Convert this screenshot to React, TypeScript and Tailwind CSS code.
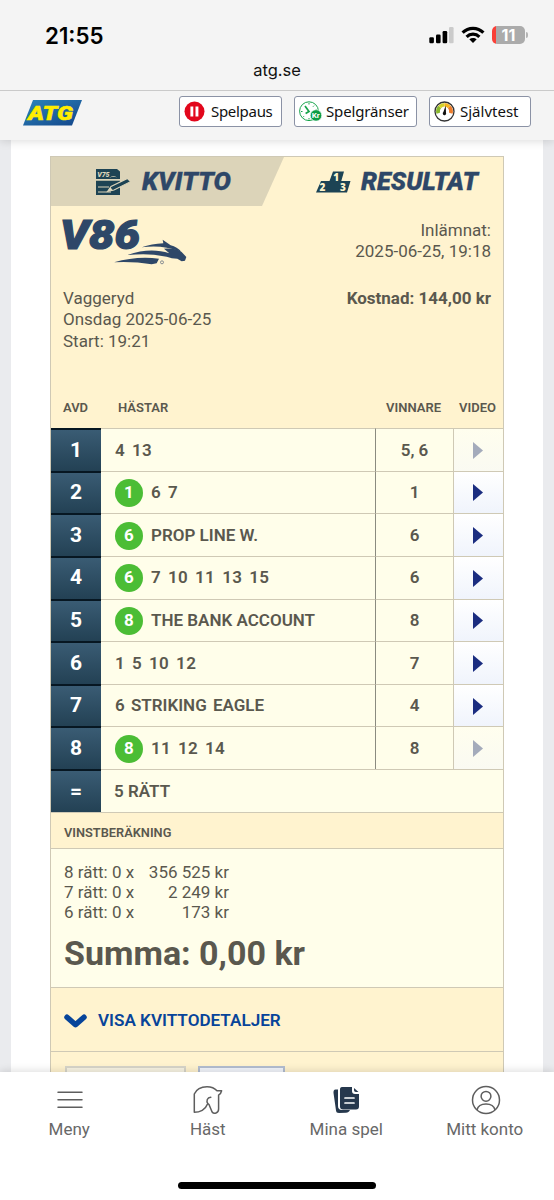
import clsx from "clsx";

type Race = {
  leg: number;
  hit?: string;
  horses: string;
  winner: string;
  video: boolean;
};

const races: Race[] = [
  { leg: 1, horses: "4 13", winner: "5, 6", video: false },
  { leg: 2, hit: "1", horses: "6 7", winner: "1", video: true },
  { leg: 3, hit: "6", horses: "PROP LINE W.", winner: "6", video: true },
  { leg: 4, hit: "6", horses: "7 10 11 13 15", winner: "6", video: true },
  { leg: 5, hit: "8", horses: "THE BANK ACCOUNT", winner: "8", video: true },
  { leg: 6, horses: "1 5 10 12", winner: "7", video: true },
  { leg: 7, horses: "6 STRIKING EAGLE", winner: "4", video: true },
  { leg: 8, hit: "8", horses: "11 12 14", winner: "8", video: false },
];

const payouts = [
  { label: "8 rätt: 0 x", amount: "356 525 kr" },
  { label: "7 rätt: 0 x", amount: "2 249 kr" },
  { label: "6 rätt: 0 x", amount: "173 kr" },
];

function StatusBar() {
  return (
    <div className="flex h-[58px] items-start justify-between pl-[45px] pr-[26px] pt-[22px]">
      <span className="font-[Inter,sans-serif] text-[22.3px] font-semibold leading-[28px] text-black">21:55</span>
      <div className="flex items-start pt-[4px]">
        <svg width="26" height="18" viewBox="0 0 26 18">
          <rect x="0.3" y="11.2" width="4.6" height="6" rx="1.2" />
          <rect x="7" y="8.6" width="4.6" height="8.6" rx="1.2" />
          <rect x="13.6" y="5" width="4.6" height="12.2" rx="1.2" />
          <rect x="20" y="1" width="4.6" height="16.2" rx="1.2" fill="#cbcbcb" />
        </svg>
        <svg className="ml-[6px]" width="24" height="18" viewBox="0 0 24 18" fill="none" stroke="#000" strokeWidth="3.2">
          <path d="M1.6 6.6C7.4.9 16.6.9 22.4 6.6" />
          <path d="M5.6 10.8c3.6-3.5 9.2-3.5 12.8 0" />
          <path d="M8.3 13.3c2.2-1.9 5.2-1.9 7.4 0L12 17z" fill="#000" stroke="none" />
        </svg>
        <div className="ml-[7px] flex h-[18px] w-[33px] items-center justify-center rounded-[5px] bg-[linear-gradient(90deg,#fa4037_4px,#ababab_4px)] font-[Inter,sans-serif] text-[16px] font-bold text-white">
          11
        </div>
        <div className="ml-px mt-[6px] h-[6px] w-[2px] rounded-r-full bg-[#b4b4b4]" />
      </div>
    </div>
  );
}

function AtgLogo() {
  return (
    <svg width="59" height="26" viewBox="0 0 59 26">
      <defs>
        <linearGradient id="atg" x1="0" y1="0" x2="1" y2="1">
          <stop offset="0" stopColor="#2c86bd" />
          <stop offset="1" stopColor="#124489" />
        </linearGradient>
      </defs>
      <path d="M10 0h49L49 25.5H0z" fill="url(#atg)" />
      <text
        x="5"
        y="20"
        textLength="45"
        lengthAdjust="spacingAndGlyphs"
        className="font-[Roboto,sans-serif] text-[20px] font-black italic"
        fill="#ffed00"
        stroke="#ffed00"
        strokeWidth="0.5"
      >
        ATG
      </text>
    </svg>
  );
}

function PauseIcon() {
  return (
    <svg width="21" height="21" viewBox="0 0 21 21">
      <circle cx="10.5" cy="10.5" r="10" fill="#e2071c" />
      <path d="M6.4 5.5h2.9v10H6.4zM11.5 5.5h2.9v10h-2.9z" fill="#fff" />
    </svg>
  );
}

function LimitIcon() {
  return (
    <svg width="23" height="21" viewBox="0 0 23 21" fill="none" stroke="#16a34a">
      <circle cx="10" cy="10.2" r="9.4" strokeWidth="1" />
      <path d="M6 5l4 5.6-3.4 2" strokeWidth="1.7" />
      <path d="M10 2v1.5M2 10.5h1.5M16.5 9H18M10 17v1.5M15 4.700l-1 1M5 15.200l-1 1" strokeWidth="1" />
      <circle cx="17" cy="14.4" r="5.7" fill="#0b9d45" stroke="#fff" strokeWidth="0.6" />
      <text x="12.8" y="17.4" className="font-[Roboto,sans-serif] text-[8px] font-bold" fill="#fff" stroke="none">
        Kr
      </text>
    </svg>
  );
}

function GaugeIcon() {
  return (
    <svg width="21" height="21" viewBox="0 0 21 21" fill="none">
      <circle cx="10.5" cy="10.5" r="9.5" fill="#fff" stroke="#333" strokeWidth="1.3" />
      <g strokeWidth="3.6">
        <path d="M4.2 12.3A6.5 6.5 0 0 1 5.7 6" stroke="#8ab92d" />
        <path d="M5.7 6a6.5 6.5 0 0 1 4.8-2.200" stroke="#d6d22b" />
        <path d="M10.5 3.8A6.5 6.5 0 0 1 15.3 6" stroke="#f7b51e" />
        <path d="M15.3 6a6.5 6.5 0 0 1 1.5 6.300" stroke="#ee7d2b" />
      </g>
      <path d="M11.7 4.500l.3 7.200a1.700 1.700 0 1 1-2.600-.6z" fill="#111" />
    </svg>
  );
}

function SiteHeader() {
  const button =
    "flex h-[31px] items-center rounded-[3px] border border-[#8b92a5] bg-white pl-[4px] font-['Noto_Sans',sans-serif] text-[15px] leading-none text-[#111]";
  return (
    <div className="flex h-[50px] items-start border-t border-[#cacaca] pl-[23px] pt-[5px]">
      <div className="mt-[4px] w-[156px]">
        <AtgLogo />
      </div>
      <div className={clsx(button, "w-[103px] gap-[6px] tracking-[-0.3px]")}>
        <PauseIcon />
        Spelpaus
      </div>
      <div className={clsx(button, "ml-[12px] w-[123px] gap-[4px] tracking-[-0.15px]")}>
        <LimitIcon />
        Spelgränser
      </div>
      <div className={clsx(button, "ml-[12px] w-[102px] gap-[5px]")}>
        <GaugeIcon />
        Självtest
      </div>
    </div>
  );
}

function ReceiptIcon() {
  return (
    <svg width="35" height="27" viewBox="0 0 35 27">
      <path d="M0 0h21l3 2.500V10H0z" fill="#1d4354" />
      <path d="M0 11.800h24V26H0z" fill="#1d4354" />
      <text x="1.2" y="7.600" className="font-[Roboto,sans-serif] text-[7px] font-black italic" fill="#ddd5ba">
        V75
      </text>
      <path d="M13 9q5-4 8-.3-3-1.800-8 .3" fill="#ddd5ba" />
      <path d="M2 18h11M2 23h13" stroke="#ddd5ba" strokeWidth="1.1" />
      <path d="M11.500 22.500l3.500-5L31.500 9.500l3 3.200-16.500 8.300z" fill="#1d4354" stroke="#ddd5ba" strokeWidth="1.1" />
      <path d="M11.500 22.500l3-4.300 2.200 3z" fill="#ddd5ba" />
    </svg>
  );
}

function PodiumIcon() {
  return (
    <svg width="35" height="22" viewBox="0 0 35 22" className="font-['Open_Sans',sans-serif] font-extrabold">
      <path d="M5 10h8.500L17 .5h11L25.300 10H34.500L31 21.500H0z" fill="#1d4354" />
      <text x="3.500" y="19.500" fontSize="10" fill="#fff3cc">2</text>
      <text x="17.300" y="10" fontSize="10" fill="#fff3cc">1</text>
      <text x="24" y="19.700" fontSize="10" fill="#fff3cc">3</text>
    </svg>
  );
}

function TabLabel({ text, width }: { text: string; width: number }) {
  return (
    <svg width={width + 4} height="34" viewBox={`0 0 ${width + 4} 34`} className="overflow-visible">
      <text
        x="1"
        y="26.300"
        textLength={width}
        lengthAdjust="spacingAndGlyphs"
        className="font-[Roboto,sans-serif] text-[26px] font-black italic"
        fill="#2e4768"
        stroke="#2e4768"
        strokeWidth="0.3"
      >
        {text}
      </text>
    </svg>
  );
}

function Tabs() {
  return (
    <div className="flex h-[49px]">
      <div className="flex w-[233px] items-start bg-[#dcd4b9] pl-[45px] pt-[12px] [clip-path:polygon(0_0,100%_0,211px_100%,0_100%)]">
        <ReceiptIcon />
        <div className="-mt-[5px] ml-[10px]">
          <TabLabel text="KVITTO" width={89} />
        </div>
      </div>
      <div className="flex flex-1 items-start pl-[32px] pt-[14px]">
        <PodiumIcon />
        <div className="-mt-[7px] ml-[9px]">
          <TabLabel text="RESULTAT" width={117} />
        </div>
      </div>
    </div>
  );
}

function V86Logo() {
  return (
    <svg width="128" height="54" viewBox="0 -4 128 54" className="overflow-visible" fill="#2e4768">
      <text
        x="-3"
        y="35"
        textLength="80"
        lengthAdjust="spacingAndGlyphs"
        className="font-[Roboto,sans-serif] text-[41px] font-black italic"
        stroke="#2e4768"
        strokeWidth="1.2"
      >
        V86
      </text>
      <g transform="translate(-23 -69) scale(.3333)">
        <path d="M305 307Q335 296 370 295L368 284 392 301Q412 306 424 320 400 311 380 308 345 301 305 307z" />
        <path d="M262 330C310 314 350 313 388 325L372 311Q408 309 425 321L439 336 435 347 425 349 412 341Q395 341 380 335 330 323 262 330z" />
        <path d="M222 352Q290 332 357 341L350 355 335 358Q280 349 222 352z" />
        <circle cx="366" cy="352" r="4.500" fill="none" stroke="#6f7886" strokeWidth="2.500" />
      </g>
    </svg>
  );
}

function ReceiptInfo() {
  return (
    <div className="flex h-[222px] flex-col text-[17px] leading-[21.300px]">
      <div className="flex h-[82px] justify-between px-[12px]">
        <div className="pt-[4px]">
          <V86Logo />
        </div>
        <div className="pt-[14px] text-right">
          <p>Inlämnat:</p>
          <p>2025-06-25, 19:18</p>
        </div>
      </div>
      <div className="flex justify-between px-[12px]">
        <div>
          <p>Vaggeryd</p>
          <p>Onsdag 2025-06-25</p>
          <p>Start: 19:21</p>
        </div>
        <p className="font-bold">Kostnad: 144,00 kr</p>
      </div>
      <div className="mt-auto flex h-[30px] text-[13px] font-semibold leading-[20px]">
        <span className="w-[67px] pl-[12px]">AVD</span>
        <span className="w-[257px]">HÄSTAR</span>
        <span className="w-[77px] text-center">VINNARE</span>
        <span className="flex-1 text-center">VIDEO</span>
      </div>
    </div>
  );
}

function LegCell({ children }: { children: React.ReactNode }) {
  return (
    <div className="flex w-[50px] items-center justify-center border-t-2 border-[#071722] bg-linear-to-b from-[#3a5c74] to-[#234154] text-[21px] font-bold text-white">
      {children}
    </div>
  );
}

function RaceRow({ race }: { race: Race }) {
  const named = /[A-Z]/.test(race.horses);
  return (
    <div className="flex h-[42.650px] bg-[#fffeea] text-[17px] font-semibold">
      <LegCell>{race.leg}</LegCell>
      <div className="flex flex-1 items-center border-t border-[#cfc9b5] pl-[14px] pt-px">
        {race.hit && (
          <span className="mr-[8px] flex size-[28px] items-center justify-center rounded-full bg-[#4bbd35] font-bold text-white">
            {race.hit}
          </span>
        )}
        <span
          className={clsx(
            !named && "tracking-[0.3px] [word-spacing:2.5px]",
            named && !race.hit && "[word-spacing:2px]"
          )}
        >
          {race.horses}
        </span>
      </div>
      <div className="flex w-[78px] items-center justify-center border-l border-t border-l-[#8b8b80] border-t-[#cfc9b5] pt-px">
        {race.winner}
      </div>
      <div
        className={clsx(
          "flex w-[50px] items-center justify-center border-l border-t border-[#cfc9b5] bg-linear-to-b pt-px",
          race.video ? "from-white to-[#f0f4fc]" : "from-[#fffeee] to-[#fafaf2]"
        )}
      >
        <svg width="11" height="17" viewBox="0 0 11 17">
          <path d="M0 0l10 8.500-10 8.500z" fill={race.video ? "#1b2d80" : "#a4abbb"} />
        </svg>
      </div>
    </div>
  );
}

function Payout() {
  return (
    <>
      <div className="h-[36px] border-t border-[#cfc9b5] pl-[13px] pt-[10px] text-[12.8px] font-semibold leading-[20px]">
        VINSTBERÄKNING
      </div>
      <div className="h-[140px] border-y border-[#cfc9b5] bg-[#fffeea] pl-[13px] pt-[13px]">
        <div className="w-[165px] text-[17px] leading-[20px]">
          {payouts.map((p) => (
            <div key={p.label} className="flex justify-between">
              <span>{p.label}</span>
              <span>{p.amount}</span>
            </div>
          ))}
        </div>
        <p className="mt-[11px] text-[34px] font-bold leading-[40px]">Summa: 0,00 kr</p>
      </div>
      <div className="flex h-[64px] items-center border-b border-[#cfc9b5] pl-[13px] pt-[4px] text-[17.1px] font-semibold text-[#07449a]">
        <svg width="23" height="15" viewBox="0 0 23 15" fill="none" stroke="#07449a" strokeWidth="5.5" strokeLinecap="round" strokeLinejoin="round">
          <path d="M3 3.200l8.500 7.500L20 3.200" />
        </svg>
        <span className="ml-[11px]">VISA KVITTODETALJER</span>
      </div>
      <div className="flex gap-[12px] pl-[14px] pt-[14px]">
        <div className="h-[40px] w-[121px] border-2 border-[#d7d5c9] bg-[#f8f4e3]" />
        <div className="h-[40px] w-[87px] border-2 border-[#b2bdd0] bg-[#f2f5fb]" />
      </div>
    </>
  );
}

function BottomNav() {
  const line = { fill: "none", stroke: "#5e5e5e", strokeWidth: 1.5 };
  const items = [
    {
      label: "Meny",
      icon: (
        <svg width="28" height="30" viewBox="0 0 28 30" {...line} strokeLinecap="round" className="translate-x-px">
          <path d="M2 7.300h24M2 14.800h24M2 22.300h24" />
        </svg>
      ),
    },
    {
      label: "Häst",
      icon: (
        <svg width="30" height="30" viewBox="0 0 30 30" {...line} strokeLinejoin="round" strokeLinecap="round">
          <path d="M1.300 27.300V9C3.500 4 9 1.700 14 1.700c4.500 0 8 1.800 10 4.100h4.600c-.3 1.800-1.600 3.300-3 4.300V24c0 4.500-4.800 5.200-6.500 3L16 19.500c-.4-.7-1.400-.7-1.800 0C12.500 24.500 7 27.300 1.300 27.300z" />
          <path d="M14.900 18.800c-2-3.300-.6-6.100 2.900-6.500" />
        </svg>
      ),
    },
    {
      label: "Mina spel",
      icon: (
        <svg width="30" height="30" viewBox="0 0 30 30" fill="#26384d" className="translate-x-px">
          <path d="M3.500 4.500H6V21c0 2.500 1.500 4 4 4h8c-1 2-2 2.500-4 2.700l-7 .3c-2 0-2.800-.8-3-2.500L1.500 8c-.2-2 .5-3.300 2-3.500z" />
          <path d="M10 2h10v4c0 2 1 3 3 3h4v12.500c0 2-1 3-3 3H11c-2 0-3-1-3-3V4.500C8 3 8.500 2 10 2zM22 3l4.500 4H24c-1.300 0-2-.7-2-2z" />
          <path d="M13 13h9M13 18h9" stroke="#fff" strokeWidth="1.700" strokeLinecap="round" />
        </svg>
      ),
    },
    {
      label: "Mitt konto",
      icon: (
        <svg width="30" height="30" viewBox="0 0 30 30" {...line} className="translate-x-px">
          <circle cx="15" cy="15" r="13.500" />
          <circle cx="15" cy="11.300" r="4.900" />
          <path d="M6 25c1-4.500 4.500-6 9-6s8 1.500 9 6" />
        </svg>
      ),
    },
  ];

  return (
    <div className="relative flex h-[128px] flex-col items-center bg-white shadow-[0_-1px_8px_rgba(0,0,0,0.14)]">
      <div className="grid w-full grid-cols-4 pt-[13px]">
        {items.map((item) => (
          <div key={item.label} className="flex flex-col items-center text-[17px] leading-[20px] text-[#686868]">
            {item.icon}
            <span className="mt-[4px]">{item.label}</span>
          </div>
        ))}
      </div>
      <div className="mb-[11px] mt-auto h-[7px] w-[198px] rounded-full bg-black" />
    </div>
  );
}

export default function App() {
  return (
    <div className="flex h-[1200px] w-[554px] flex-col overflow-hidden bg-[#eaebee] font-[Roboto,sans-serif] text-[#5a584e]">
      <div className="relative h-[140px] shrink-0 bg-[#f4f4f4] shadow-[0_1px_9px_rgba(0,0,0,0.15)]">
        <StatusBar />
        <p className="h-[32px] pt-px text-center font-[Inter,sans-serif] text-[16.5px] leading-[22px] text-[#111]">atg.se</p>
        <SiteHeader />
      </div>
      <main className="mx-[11px] h-[932px] shrink-0 overflow-hidden bg-white px-[39px] pt-[16px]">
        <div className="h-[930px] border border-[#cfc9b5] bg-[#fff3cf]">
          <Tabs />
          <ReceiptInfo />
          {races.map((race) => (
            <RaceRow key={race.leg} race={race} />
          ))}
          <div className="flex h-[42.650px] bg-[#fffeea] text-[17px] font-semibold">
            <LegCell>=</LegCell>
            <div className="flex flex-1 items-center border-t border-[#cfc9b5] pl-[13px] pt-px">5 RÄTT</div>
          </div>
          <Payout />
        </div>
      </main>
      <BottomNav />
    </div>
  );
}
